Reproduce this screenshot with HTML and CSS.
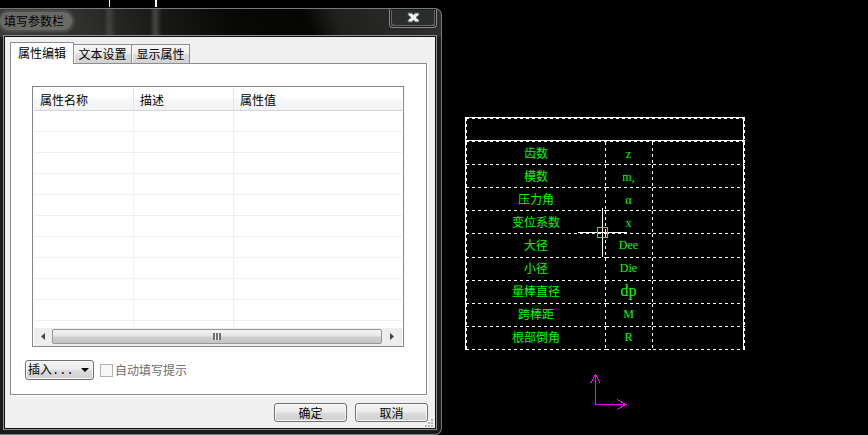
FILE: index.html
```
<!DOCTYPE html>
<html lang="zh-CN">
<head>
<meta charset="utf-8">
<title>填写参数栏</title>
<link rel="stylesheet" href="styles.css">
</head>
<body>
<main class="screen">
  <div class="dialog-side">
    <div class="backdrop" aria-hidden="true"><span class="stroke"></span><span class="stroke"></span></div>
    <section class="dialog" aria-labelledby="dialog-title">
      <header class="titlebar">
        <h1 class="title" id="dialog-title">填写参数栏</h1>
        <button class="close" type="button" aria-label="关闭">
          <svg width="13" height="11" viewBox="0 0 13 11"><path d="M1 1h4l1.500 2L8 1h4v2L9 5.500 12 8v2H8L6.500 8 5 10H1V8l3-2.500L1 3z" fill="#f4f4f4" stroke="#555a5a" stroke-width="1"/></svg>
        </button>
      </header>
      <div class="client">
        <div class="tabs" role="tablist">
          <button class="tab active" type="button" role="tab" aria-selected="true">属性编辑</button>
          <button class="tab" type="button" role="tab" aria-selected="false">文本设置</button>
          <button class="tab" type="button" role="tab" aria-selected="false">显示属性</button>
        </div>
        <div class="panel">
          <div class="list">
            <table class="grid">
              <colgroup><col class="c-name"><col class="c-desc"><col></colgroup>
              <thead><tr><th>属性名称</th><th>描述</th><th>属性值</th></tr></thead>
              <tbody>
                <tr><td></td><td></td><td></td></tr>
                <tr><td></td><td></td><td></td></tr>
                <tr><td></td><td></td><td></td></tr>
                <tr><td></td><td></td><td></td></tr>
                <tr><td></td><td></td><td></td></tr>
                <tr><td></td><td></td><td></td></tr>
                <tr><td></td><td></td><td></td></tr>
                <tr><td></td><td></td><td></td></tr>
                <tr><td></td><td></td><td></td></tr>
                <tr><td></td><td></td><td></td></tr>
                <tr class="tail"><td></td><td></td><td></td></tr>
              </tbody>
            </table>
            <div class="scrollbar">
              <button class="arrow" type="button" aria-label="向左滚动"><svg width="4" height="7" viewBox="0 0 4 7"><path d="M4 0v7L0 3.500z" fill="#444"/></svg></button>
              <div class="thumb"><span class="grip"></span></div>
              <button class="arrow right" type="button" aria-label="向右滚动"><svg width="4" height="7" viewBox="0 0 4 7"><path d="M0 0v7l4-3.500z" fill="#444"/></svg></button>
            </div>
          </div>
          <div class="options">
            <button class="btn insert" type="button"><span>插入<span class="dots">...</span></span><svg width="8" height="4" viewBox="0 0 8 4"><path d="M0 0h8L4 4z" fill="#000"/></svg></button>
            <input class="check" type="checkbox" id="auto" disabled><label class="check-label" for="auto">自动填写提示</label>
          </div>
        </div>
        <footer class="actions">
          <button class="btn" type="button">确定</button>
          <button class="btn" type="button">取消</button>
          <svg class="sizer" width="8" height="8" viewBox="0 0 8 8" fill="#b4b4b4"><path d="M6 0h2v2H6zM3 3h2v2H3zM6 3h2v2H6zM0 6h2v2H0zM3 6h2v2H3zM6 6h2v2H6z"/></svg>
        </footer>
      </div>
    </section>
  </div>
  <section class="drawing">
    <table class="params">
      <colgroup><col class="p-name"><col class="p-sym"><col></colgroup>
      <thead><tr><th colspan="3"></th></tr></thead>
      <tbody>
        <tr><td>齿数</td><td class="sym small">z</td><td></td></tr>
        <tr><td>模数</td><td class="sym small">m,</td><td></td></tr>
        <tr><td>压力角</td><td class="sym small">α</td><td></td></tr>
        <tr><td>变位系数</td><td class="sym small">x</td><td></td></tr>
        <tr><td>大径</td><td class="sym">Dee</td><td></td></tr>
        <tr><td>小径</td><td class="sym">Die</td><td></td></tr>
        <tr><td>量棒直径</td><td class="sym large">dp</td><td></td></tr>
        <tr><td>跨棒距</td><td class="sym">M</td><td></td></tr>
        <tr><td>根部倒角</td><td class="sym">R</td><td></td></tr>
      </tbody>
    </table>
    <svg class="crosshair" width="49" height="49" viewBox="0 0 49 49" shape-rendering="crispEdges"><path d="M24.500 0v49M0 24.500h49" stroke="#fff"/><path d="M19.500 19.500h10v10h-10z" fill="none" stroke="#00ff80"/></svg>
    <svg class="axes" width="37" height="36" viewBox="0 0 37 36" fill="none" stroke="#f0f" shape-rendering="crispEdges"><path d="M5.500 0v30.500H36M.500 9.500l5-9 5 9M27 25.500l9 5-9 5"/></svg>
  </section>
</main>
</body>
</html>
```
FILE: styles.css
```
* { box-sizing: border-box; }
body {
  margin: 0;
  background: #000;
  font: 12px/16px "Noto Sans CJK SC", sans-serif;
  color: #000;
}
button { font: inherit; color: inherit; padding: 0; }
.screen {
  display: grid;
  grid-template-columns: 442fr 426fr;
  min-height: 100vh;
}
.dialog-side { min-width: 0; display: flex; flex-direction: column; }
.backdrop { height: 8px; display: flex; gap: 45px; padding-left: 109px; }
.stroke { width: 1px; height: 7px; background: #fff; }
.stroke + .stroke { width: 2px; }

/* Glass window frame */
.dialog {
  flex: 1;
  display: flex;
  flex-direction: column;
  border: 1px solid #767a7a;
  border-left: 0;
  border-radius: 0 7px 7px 0;
  padding: 0 4px 4px 3px;
  background:
    linear-gradient(90deg, transparent 104px, #60626070 109px, transparent 116px, transparent 150px, #70727080 155px, transparent 162px) top / 100% 28px no-repeat,
    linear-gradient(68deg, #3a3b38 0, #30312e 80px, #1a1b18 150px, #080907 220px, #050604 290px, #20211f 320px, #2c2d2b 400px, #30312f 100%) top / 100% 28px no-repeat,
    #1b1c1a;
}
.titlebar {
  height: 26px;
  display: flex;
  justify-content: space-between;
  align-items: flex-start;
}
.title {
  margin: 3px 0 0 -3px;
  padding: 0 8px 0 4px;
  border-radius: 10px;
  font-size: 12px;
  line-height: 18px;
  font-weight: 400;
  background: #696a68;
  box-shadow: 0 0 3px 2px #565755;
}
.close {
  width: 48px;
  height: 19px;
  display: flex;
  justify-content: center;
  align-items: center;
  padding-bottom: 2px;
  border: 1px solid #868a8a;
  border-top: 0;
  border-radius: 0 0 4px 4px;
  background: #2b2d2c;
  box-shadow: inset 0 0 0 1px #1a1c1b, inset 2px -2px 0 #626665, inset -2px -2px 0 #626665;
}
.client {
  flex: 1;
  display: flex;
  flex-direction: column;
  border: 1px solid #8c9090;
  outline: 1px solid #10110f;
  outline-offset: -2px;
  padding: 6px 9px 7px 6px;
  background: #f0f0f0;
}

/* Tabs */
.tabs { display: flex; align-items: flex-end; height: 21px; }
.tab {
  height: 19px;
  width: 58px;
  border: 1px solid #8a8d92;
  border-left-width: 0;
  border-bottom: 0;
  line-height: 18px;
  background: linear-gradient(#f2f2f2 45%, #dedede 50%, #d2d2d2);
  box-shadow: inset 1px 1px 0 #fafafa;
}
.tab.active {
  position: relative;
  width: 64px;
  height: 22px;
  margin-bottom: -1px;
  padding-bottom: 2px;
  border-left-width: 1px;
  background: #fff;
  box-shadow: none;
}
.panel {
  flex: 1;
  border: 1px solid #8a8d92;
  padding: 22px 22px 10px 14px;
  background: #fff;
  box-shadow: 1px 1px 0 #fff;
}

/* Attribute list */
.list {
  margin-left: 7px;
  border: 1px solid #828790;
  padding: 1px 1px 0;
}
.grid {
  width: 100%;
  table-layout: fixed;
  border-collapse: separate;
  border-spacing: 0;
}
.c-name, .c-desc { width: 100px; }
.grid th {
  height: 23px;
  padding: 2px 0 0 6px;
  text-align: left;
  font-weight: 400;
  border-bottom: 1px solid #d5d5d5;
  border-right: 1px solid #e3e4e6;
  background: linear-gradient(#fff 45%, #f7f8fa 50%, #f1f2f4);
}
.grid td {
  height: 21px;
  padding: 0;
  border-bottom: 1px solid #f0f0f0;
  border-right: 1px solid #f0f0f0;
}
.grid th:last-child, .grid td:last-child { border-right: 0; }
.grid .tail td { height: 7px; border-bottom: 0; }
.scrollbar {
  height: 18px;
  display: flex;
  align-items: center;
  padding-bottom: 1px;
  background: #ededed;
}
.arrow {
  width: 18px;
  height: 17px;
  border: 0;
  display: flex;
  justify-content: center;
  align-items: center;
  background: transparent;
}
.arrow.right { width: 20px; }
.thumb {
  flex: 1;
  height: 15px;
  display: flex;
  justify-content: center;
  align-items: center;
  border: 1px solid #979797;
  border-radius: 2px;
  background: linear-gradient(#f3f3f3, #e6e6e6 48%, #cfcfd0 52%, #c6c6c8);
}
.grip {
  width: 8px;
  height: 7px;
  background: repeating-linear-gradient(90deg, #707070 0 2px, #eee 2px 3px);
}

/* Controls */
.options { display: flex; align-items: center; margin-top: 13px; }
.btn {
  width: 73px;
  height: 19px;
  border: 1px solid #707070;
  border-radius: 3px;
  line-height: 16px;
  background: linear-gradient(#f3f3f3, #ebebeb 48%, #dcdcdc 52%, #cfcfcf);
  box-shadow: inset 0 0 0 1px #fbfbfb;
}
.insert {
  width: 69px;
  height: 20px;
  display: flex;
  justify-content: space-between;
  align-items: center;
  padding: 0 4px 0 2px;
}
.dots { font-family: "Liberation Mono", monospace; }
.check {
  appearance: none;
  width: 13px;
  height: 13px;
  margin: 0 2px 0 6px;
  border: 1px solid #b1b1b1;
  background: #f6f7f9;
}
.check-label { color: #6d6d6d; }
.actions {
  position: relative;
  display: flex;
  justify-content: flex-end;
  gap: 8px;
  padding-top: 8px;
  margin-right: -1px;
}
.sizer { position: absolute; right: -5px; bottom: -5px; }

/* Drawing area */
.drawing { position: relative; min-width: 0; }
.params {
  --h: repeating-linear-gradient(90deg, #fff 0 3px, transparent 3px 6px);
  --v: repeating-linear-gradient(#fff 0 3px, transparent 3px 6px);
  width: 280px;
  height: 233px;
  margin: 117px 0 0 23px;
  table-layout: fixed;
  border-collapse: separate;
  border-spacing: 0;
  color: #0f0;
  border-left: 1px solid #fff;
  border-top: 1px solid #fff;
  background:
    var(--h) left top / 100% 1px no-repeat,
    var(--v) left top / 1px 100% no-repeat,
    var(--v) right top / 1px 100% no-repeat,
    linear-gradient(#fff, #fff) right 1px top / 1px 100% no-repeat;
}
.p-name { width: 140px; }
.p-sym { width: 47px; }
.params th {
  height: 24px;
  padding: 0;
  background:
    var(--h) left bottom / 100% 1px no-repeat,
    linear-gradient(#fff, #fff) left bottom 1px / 100% 1px no-repeat;
}
.params td {
  height: 23px;
  padding: 0 0 2px;
  text-align: center;
  line-height: 16px;
  background:
    var(--h) left bottom / 100% 1px no-repeat,
    var(--v) right top / 1px 100% no-repeat;
}
.params td:last-child { background: var(--h) left bottom / 100% 1px no-repeat; }
.params .sym {
  padding-right: 2px;
  font-family: "Liberation Serif", serif;
  font-size: 12px;
}
.params .small { padding-top: 2px; }
.params .large { font-size: 16px; }
.crosshair { position: absolute; left: 136px; top: 208px; }
.axes { position: absolute; left: 148px; top: 374px; }
```
